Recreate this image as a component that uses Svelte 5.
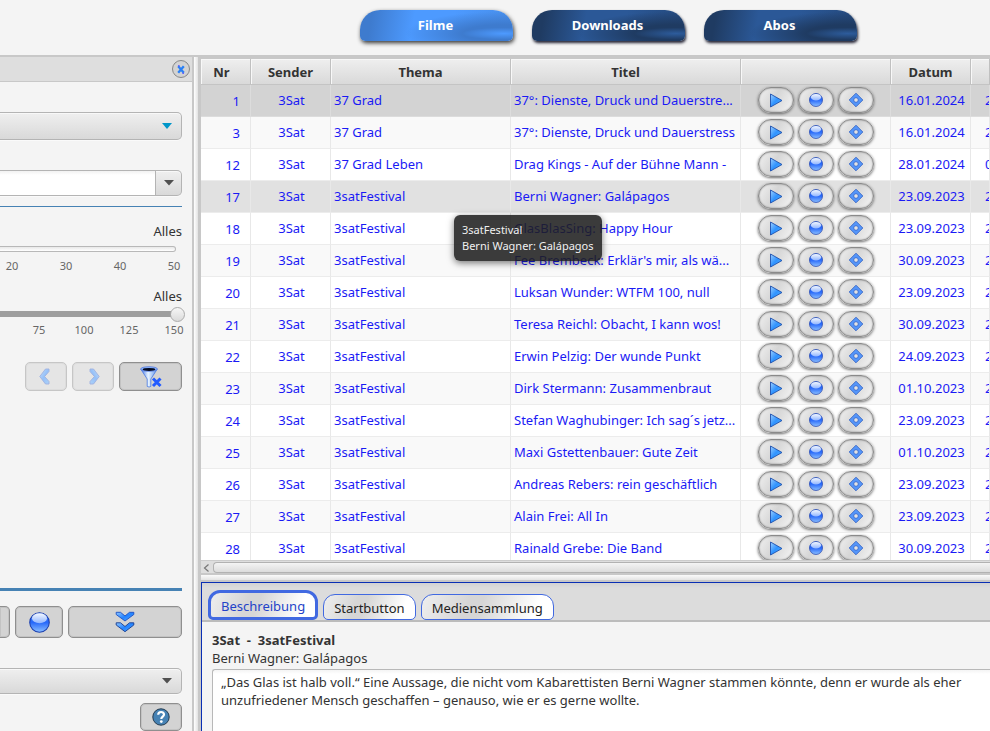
<script>
  const tabs = ['Filme', 'Downloads', 'Abos'];
  const infoTabs = ['Beschreibung', 'Startbutton', 'Mediensammlung'];
  let activeTab = $state('Filme');
  let activeInfo = $state('Beschreibung');

  const films = [
    [1, '37 Grad', '37°: Dienste, Druck und Dauerstre...', '16.01.2024', '2'],
    [3, '37 Grad', '37°: Dienste, Druck und Dauerstress', '16.01.2024', '2'],
    [12, '37 Grad Leben', 'Drag Kings - Auf der Bühne Mann -', '28.01.2024', '0'],
    [17, '3satFestival', 'Berni Wagner: Galápagos', '23.09.2023', '2'],
    [18, '3satFestival', 'GlasBlasSing: Happy Hour', '23.09.2023', '2'],
    [19, '3satFestival', "Fee Brembeck: Erklär's mir, als wä...", '30.09.2023', '2'],
    [20, '3satFestival', 'Luksan Wunder: WTFM 100, null', '23.09.2023', '2'],
    [21, '3satFestival', 'Teresa Reichl: Obacht, I kann wos!', '30.09.2023', '2'],
    [22, '3satFestival', 'Erwin Pelzig: Der wunde Punkt', '24.09.2023', '2'],
    [23, '3satFestival', 'Dirk Stermann: Zusammenbraut', '01.10.2023', '2'],
    [24, '3satFestival', 'Stefan Waghubinger: Ich sag´s jetz...', '23.09.2023', '2'],
    [25, '3satFestival', 'Maxi Gstettenbauer: Gute Zeit', '01.10.2023', '2'],
    [26, '3satFestival', 'Andreas Rebers: rein geschäftlich', '23.09.2023', '2'],
    [27, '3satFestival', 'Alain Frei: All In', '23.09.2023', '2'],
    [28, '3satFestival', 'Rainald Grebe: Die Band', '30.09.2023', '2']
  ];
  const description =
    '„Das Glas ist halb voll.“ Eine Aussage, die nicht vom Kabarettisten Berni Wagner stammen könnte, denn er wurde als eher unzufriedener Mensch geschaffen – genauso, wie er es gerne wollte.';
</script>

{#snippet ball(size)}
  <svg width={size} height={size} viewBox="0 0 20 20" aria-hidden="true">
    <circle cx="10" cy="10" r="9.3" fill="url(#ballFill)" stroke="#1c3fae" />
    <ellipse cx="10" cy="6" rx="7.2" ry="4.7" fill="url(#ballGloss)" />
  </svg>
{/snippet}

{#snippet chevron()}
  <svg width="11" height="17" viewBox="0 0 11 17" aria-hidden="true">
    <path d="M6.500 1H10v2.500L5.600 8.500 10 13.500V16H6.500L.8 8.500z" fill="url(#chevFill)" stroke="#3b62c8" stroke-width=".9" />
  </svg>
{/snippet}

<svg class="defs" width="0" height="0" aria-hidden="true">
  <defs>
    <linearGradient id="ballFill" x1="0" y1="0" x2="0" y2="1">
      <stop offset="0" stop-color="#3d78f0" /><stop offset=".5" stop-color="#2869fa" />
      <stop offset="1" stop-color="#8cc0ff" />
    </linearGradient>
    <linearGradient id="ballGloss" x1="0" y1="0" x2="0" y2="1">
      <stop offset="0" stop-color="#f4f8ff" /><stop offset="1" stop-color="#8fb4ff" />
    </linearGradient>
    <linearGradient id="playFill" x1="0" y1="0" x2="1" y2="1">
      <stop offset="0" stop-color="#9fd0ff" /><stop offset=".5" stop-color="#2f93ff" />
      <stop offset="1" stop-color="#57b5ff" />
    </linearGradient>
    <linearGradient id="chevFill" x1="0" y1="0" x2="1" y2="1">
      <stop offset="0" stop-color="#8fc6ff" /><stop offset=".5" stop-color="#2383ff" />
      <stop offset="1" stop-color="#57aaff" />
    </linearGradient>
    <linearGradient id="funnelFill" x1="0" y1="0" x2="1" y2="0">
      <stop offset="0" stop-color="#3f74e8" /><stop offset=".45" stop-color="#e8f4ff" />
      <stop offset="1" stop-color="#5c93ef" />
    </linearGradient>
  </defs>
</svg>

<div class="app">
  <nav class="top">
    {#each tabs as t}
      <button class="main-tab" class:active={activeTab === t} onclick={() => (activeTab = t)}>{t}</button>
    {/each}
  </nav>

  <div class="body">
    <aside>
      <div class="side-head">
        <button class="close" aria-label="Filter schließen">
          <svg width="8" height="9" viewBox="0 0 8 9">
            <path d="M1.2 1.2 6.8 7.8M6.8 1.2 1.2 7.8" stroke="#2a80f5" stroke-width="2.3" />
            <path d="M1 .8h1.6M5.4 8.3H7" stroke="#5b3cff" />
          </svg>
        </button>
      </div>
      <div class="filters">
        <div class="combo first">
          <select aria-label="Sender"><option></option></select>
          <svg width="10" height="6" viewBox="0 0 10 6"><path d="M0 0h10L5 6z" fill="#0096c9" /></svg>
        </div>
        <div class="combo edit">
          <input type="text" aria-label="Thema" />
          <button aria-label="Themen anzeigen">
            <svg width="10" height="6" viewBox="0 0 10 6"><path d="M0 0h10L5 5.5z" fill="#505050" /></svg>
          </button>
        </div>
        <hr class="thin" />
        <label class="range-label days" for="days">Alles</label>
        <input id="days" class="range plain" type="range" min="0" max="50" value="0" />
        <div class="ticks"><span>20</span><span>30</span><span>40</span><span>50</span></div>
        <label class="range-label dur" for="dur">Alles</label>
        <input id="dur" class="range filled" type="range" min="0" max="150" value="150" />
        <div class="ticks dense"><span>75</span><span>100</span><span>125</span><span>150</span></div>
        <div class="history">
          <button class="btn" disabled aria-label="Zurück">{@render chevron()}</button>
          <button class="btn next" disabled aria-label="Vor">{@render chevron()}</button>
          <button class="btn wide" aria-label="Filter löschen">
            <svg width="22" height="22" viewBox="0 0 22 22">
              <path d="M.8 3.200 7.200 13v7.400q2 1.200 3.600 0V13l6.400-9.800z" fill="url(#funnelFill)" stroke="#4a78df" stroke-width=".8" />
              <ellipse cx="9" cy="3" rx="8.400" ry="2.300" fill="#8db8ff" stroke="#4a6fd8" stroke-width=".7" />
              <ellipse cx="9" cy="3.400" rx="6.400" ry="1.500" fill="#040a22" />
              <path d="M13 12.500 20.500 20M20.500 12.500 13 20" stroke="#235bff" stroke-width="3" />
            </svg>
          </button>
        </div>
      </div>
      <div class="profile">
        <hr class="thick" />
        <div class="actions">
          <button class="btn cut" aria-label="Profil laden"></button>
          <button class="btn rec" aria-label="Profil speichern">{@render ball(21)}</button>
          <button class="btn grow" aria-label="Mehr">
            <svg width="20" height="22" viewBox="0 0 20 22">
              <path d="M1.200 1.300h4.300L10 5l4.500-3.700h4.300V3.500L10 10 1.200 3.500z" fill="url(#chevFill)" stroke="#1a4fc4" stroke-width=".9" />
              <path d="M1.200 11.800h4.300L10 15.500l4.500-3.700h4.300V14L10 20.700 1.200 14z" fill="url(#chevFill)" stroke="#173c8f" stroke-width=".9" />
            </svg>
          </button>
        </div>
        <div class="combo last">
          <select aria-label="Filterprofil"><option></option></select>
          <svg width="10" height="6" viewBox="0 0 10 6"><path d="M0 0h10L5 5.500z" fill="#505050" /></svg>
        </div>
        <button class="btn help" aria-label="Hilfe">
          <svg width="18" height="18" viewBox="0 0 18 18">
            <circle cx="9" cy="9" r="8.200" fill="#4682b4" stroke="#243b50" />
            <path d="M6.200 6.800C6.200 3 12 3.200 12 6.500c0 2-2.700 2.200-2.700 4.500" fill="none" stroke="#fff" stroke-width="2.200" />
            <circle cx="9.300" cy="13.600" r="1.400" fill="#fff" />
          </svg>
        </button>
      </div>
    </aside>
    <div class="divider"></div>

    <main>
      <div class="table-view">
        <table>
          <colgroup>
            <col class="c-nr" /><col class="c-sender" /><col class="c-thema" /><col class="c-titel" />
            <col class="c-act" /><col class="c-date" /><col />
          </colgroup>
          <thead>
            <tr><th class="nr">Nr</th><th>Sender</th><th>Thema</th><th>Titel</th><th></th><th>Datum</th><th></th></tr>
          </thead>
          <tbody>
            {#each films as [nr, thema, titel, datum, zeit], i}
              <tr class:selected={i === 0} class:hovered={i === 3}>
                <td class="nr">{nr}</td>
                <td class="mid">3Sat</td>
                <td>{thema}</td>
                <td>{titel}</td>
                <td class="acts">
                  <div>
                    <button class="pill" aria-label="Abspielen">
                      <svg width="15" height="15" viewBox="0 0 15 15"><path d="M2.500 1v13L14 7.500z" fill="url(#playFill)" stroke="#1d4fae" stroke-width=".9" /></svg>
                    </button>
                    <button class="pill" aria-label="Aufzeichnen">{@render ball(14)}</button>
                    <button class="pill" aria-label="Merken">
                      <svg width="16" height="16" viewBox="0 0 16 16">
                        <path d="M8 1.200 14.800 8 8 14.800 1.200 8z" fill="#5496fa" stroke="#3a67c4" stroke-width=".9" stroke-linejoin="round" />
                        <circle cx="8" cy="8" r="2.300" fill="#e3e3e3" stroke="#3261c8" stroke-width=".8" />
                      </svg>
                    </button>
                  </div>
                </td>
                <td class="mid">{datum}</td>
                <td class="time">{zeit}</td>
              </tr>
            {/each}
          </tbody>
        </table>
        <div class="tooltip" role="tooltip">3satFestival<br />Berni Wagner: Galápagos</div>
      </div>
      <div class="hscroll">
        <svg width="12" height="13" viewBox="0 0 12 13"><path d="M7.500 3.500 3.500 7l4 3.500" fill="none" stroke="#777" stroke-width="1.200" /></svg>
        <div class="thumb"></div>
      </div>
      <div class="hdivider"></div>
      <section class="info">
        <div class="info-tabs">
          {#each infoTabs as t}
            <button class="info-tab" class:active={activeInfo === t} onclick={() => (activeInfo = t)}>{t}</button>
          {/each}
        </div>
        <div class="info-body">
          <h2>3Sat&nbsp; -&nbsp; 3satFestival</h2>
          <label for="desc">Berni Wagner: Galápagos</label>
          <textarea id="desc" value={description}></textarea>
        </div>
      </section>
    </main>
  </div>
</div>

<style>
  :global(body) { margin: 0; background: #f4f4f4; }
  * { box-sizing: border-box; }
  .defs { position: absolute; }
  svg { display: block; }
  button, input, select, textarea { font: inherit; color: inherit; margin: 0; padding: 0; outline: none; }
  .app {
    height: 100vh; display: flex; flex-direction: column; overflow: hidden;
    background: #f4f4f4; color: #333; font: 13px/18px "Noto Sans", sans-serif;
  }
  .top { flex: none; height: 55px; display: flex; gap: 19px; padding: 10px 0 0 360px; }
  .main-tab {
    width: 153px; height: 31px; padding: 0 2px 2px 0; border: 0; border-radius: 20px 20px 5px 5px; color: #fff; font-weight: 700;
    background:
      radial-gradient(ellipse 42px 6px at 94% 76%, #2d5c9c, #2d5c9c00),
      radial-gradient(ellipse 95px 22px at 92% 76%, #1f3b62 40%, #1f3b6200 100%),
      linear-gradient(100deg, #1f3b62 8%, #2b5897 35%, #2b5897 60%, #24487b);
    box-shadow: 1px 2px 3px #223;
  }
  .main-tab.active {
    background:
      radial-gradient(ellipse 42px 6px at 94% 76%, #4d9aff, #4d9aff00),
      radial-gradient(ellipse 95px 22px at 92% 76%, #3e7bce 40%, #3e7bce00 100%),
      linear-gradient(100deg, #3e7bce 8%, #4d9aff 35%, #4d9aff 60%, #478de8);
    box-shadow: 1px 2px 4px #333;
  }
  .body { flex: 1; min-height: 0; display: flex; border-top: 2px solid #c8c8c8; }

  aside { flex: 0 0 194px; min-width: 0; display: flex; flex-direction: column; border-right: 2px solid #c8c8c8; }
  .side-head {
    flex: none; height: 25px; display: flex; align-items: center; justify-content: flex-end;
    padding-right: 2px; background: #dedede; border-bottom: 1px solid #c8c8c8;
  }
  .close {
    width: 18px; height: 18px; border: 1px solid #888; border-radius: 50%; background: #d3d3d3;
    display: grid; place-items: center;
  }
  .filters, .profile { display: flex; flex-direction: column; padding-right: 10px; }
  .profile { margin-top: auto; }
  .combo {
    height: 28px; display: flex; align-items: center; border: 1px solid #b4b4b4; border-left: 0;
    border-radius: 0 5px 5px 0; background: linear-gradient(#efefef, #d9d9d9);
    box-shadow: inset 0 1px #f8f8f8, 0 1px #fafafa; overflow: hidden;
  }
  .combo select { flex: 1; min-width: 0; height: 100%; border: 0; background: none; appearance: none; }
  .combo > svg { margin-right: 9px; }
  .combo.first { margin-top: 30px; }
  .combo.edit { margin-top: 30px; height: 26px; }
  .edit input { flex: 1; min-width: 0; height: 100%; border: 0; background: linear-gradient(#f2f2f2, #fff 4px); }
  .edit button { width: 26px; height: 100%; border: 0; border-left: 1px solid #b4b4b4; background: none; display: grid; place-items: center; }
  hr { width: 100%; margin: 0; border: 0; background: #4682b4; }
  .thin { height: 1px; margin-top: 10px; }
  .thick { height: 3px; }
  .range-label { text-align: right; }
  .days { margin-top: 15px; }
  .dur { margin-top: 12px; }
  .range { appearance: none; height: 6px; width: 176px; background: #fafafa; }
  .plain { margin-top: 6px; border: 1px solid #b8b8b8; border-left: 0; border-radius: 0 4px 4px 0; background: linear-gradient(#e8e8e8, #fff); }
  .plain::-webkit-slider-thumb { appearance: none; width: 0; height: 0; }
  .filled { margin-top: 6px; width: 185px; background: linear-gradient(90deg, #9e9e9e 177px, transparent 177px); }
  .filled::-webkit-slider-thumb {
    appearance: none; width: 15px; height: 15px; border: 1px solid #aaa; border-radius: 50%;
    background: linear-gradient(#f6f6f6, #dadada);
  }
  .ticks { display: flex; justify-content: flex-end; gap: 28px; margin: 5px -5px 0 0; height: 18px; font-size: 11px; color: #666; }
  .ticks.dense { gap: 19px; margin-top: 4px; }
  .ticks span { flex: 0 0 26px; text-align: center; }
  .history { display: flex; justify-content: flex-end; gap: 5px; margin-top: 23px; }
  .btn {
    height: 29px; border: 1px solid #8f8f8f; border-radius: 5px; background: #d3d3d3;
    display: grid; place-items: center; box-shadow: inset 0 0 0 1px #c3c3c3;
  }
  .btn:disabled { opacity: .45; }
  .history .btn { width: 42px; padding-right: 4px; }
  .next { transform: scaleX(-1); }
  .history .wide { width: 63px; padding: 0; }
  .actions { display: flex; gap: 5px; margin-top: 15px; }
  .actions .btn { height: 32px; }
  .cut { width: 10px; border-left: 0; border-radius: 0 5px 5px 0; }
  .rec { width: 48px; }
  .grow { flex: 1; }
  .combo.last { margin-top: 30px; height: 26px; }
  .help { align-self: flex-end; width: 42px; height: 28px; margin-top: 9px; }

  .divider { flex: 0 0 7px; background: linear-gradient(90deg, #fff, #e2e2e2 4px, #c8c8c8 4px); }
  main { flex: 1; min-width: 0; display: flex; flex-direction: column; }
  .table-view { position: relative; flex: 1; min-height: 0; overflow: hidden; border-top: 2px solid #c8c8c8; background: #fff; }
  table { width: 100%; table-layout: fixed; border-collapse: separate; border-spacing: 0; }
  .c-nr { width: 50px; } .c-sender { width: 80px; } .c-thema { width: 180px; } .c-titel { width: 230px; }
  .c-act { width: 150px; } .c-date { width: 80px; }
  th {
    height: 26px; padding: 0; font-weight: 700; border-right: 1px solid #c0c0c0; border-bottom: 1px solid #c4c4c4;
    background: linear-gradient(#efefef, #d9d9d9); box-shadow: inset 1px 1px #f8f8f8;
  }
  th.nr { padding-right: 8px; }
  td {
    height: 32px; padding: 0 4px 1px 3px; color: #1a1af5; white-space: nowrap; overflow: hidden; text-overflow: ellipsis;
    border-right: 1px solid #e8e8e8; border-bottom: 1px solid #ececec;
  }
  td.nr { text-align: right; padding: 1px 10px 0 0; }
  td.mid { text-align: center; padding: 0 0 1px 2px; }
  td.time { padding: 0 0 1px 14px; text-overflow: clip; }
  td.acts { padding: 0; }
  tbody tr:nth-child(even) { background: #f9f9f9; }
  tbody tr.selected { background: #d3d3d3; }
  tbody tr.hovered { background: #e1e1e1; }
  .selected td { border-right-color: #dcdcdc; border-bottom-color: #dcdcdc; }
  .acts div { display: flex; justify-content: center; gap: 4px; padding-bottom: 1px; }
  .pill {
    width: 36px; height: 26px; border: 1px solid #8a8a8a; border-radius: 13px;
    background: linear-gradient(120deg, #f2f2f2, #d6d6d6 45%, #f6f6f6);
    box-shadow: inset 0 0 2px #777, 0 1px 3px #666; display: grid; place-items: center;
  }
  .tooltip {
    position: absolute; left: 253px; top: 156px; padding: 7px 8px; border-radius: 6px; color: #f0f0f0;
    background: #1e1e1ede; font-size: 11px; line-height: 16px; box-shadow: 0 2px 7px #0008; white-space: nowrap;
  }
  .hscroll { flex: none; height: 13px; display: flex; align-items: center; background: #dedede; border-top: 1px solid #ccc; overflow: hidden; }
  .thumb { flex: 1; height: 11px; border: 1px solid #b2b2b2; border-right: 0; border-radius: 4px 0 0 4px; background: linear-gradient(#f4f4f4, #dcdcdc); }
  .hdivider { flex: none; height: 9px; background: linear-gradient(#c8c8c8 2px, #fafafa 2px, #e4e4e4 7px, #c8c8c8 7px); }
  .info { flex: 0 0 149px; display: flex; flex-direction: column; border: solid #0a2fb4; border-width: 1px 0 0 1px; }
  .info-tabs {
    flex: none; height: 39px; display: flex; align-items: flex-end; gap: 5px; padding-left: 6px;
    background: linear-gradient(#d2d2d2, #dcdcdc 5px); border-bottom: 2px solid #bcbcbc;
  }
  .info-tab {
    height: 26px; padding: 1px 10px 0; border: 1px solid #4169e1; border-radius: 12px 12px 5px 5px; color: #222;
    background: linear-gradient(110deg, #eee, #d6d6d6 35%, #d6d6d6 45%, #fff 85%);
  }
  .info-tab.active { height: 30px; border-width: 3px; color: #2343c8; }
  .info-body { flex: 1; min-height: 0; display: flex; flex-direction: column; padding: 9px 0 0 10px; }
  h2 { margin: 0; font-size: 13px; line-height: 18px; }
  textarea {
    flex: 1; width: 100%; margin-top: 2px; padding: 3px 8px; border: solid #b8b8b8; border-width: 1px 0 0 1px;
    border-radius: 3px 0 0 0; background: linear-gradient(#f4f4f4, #fff 4px); resize: none; line-height: 18px; overflow: hidden;
  }
</style>
